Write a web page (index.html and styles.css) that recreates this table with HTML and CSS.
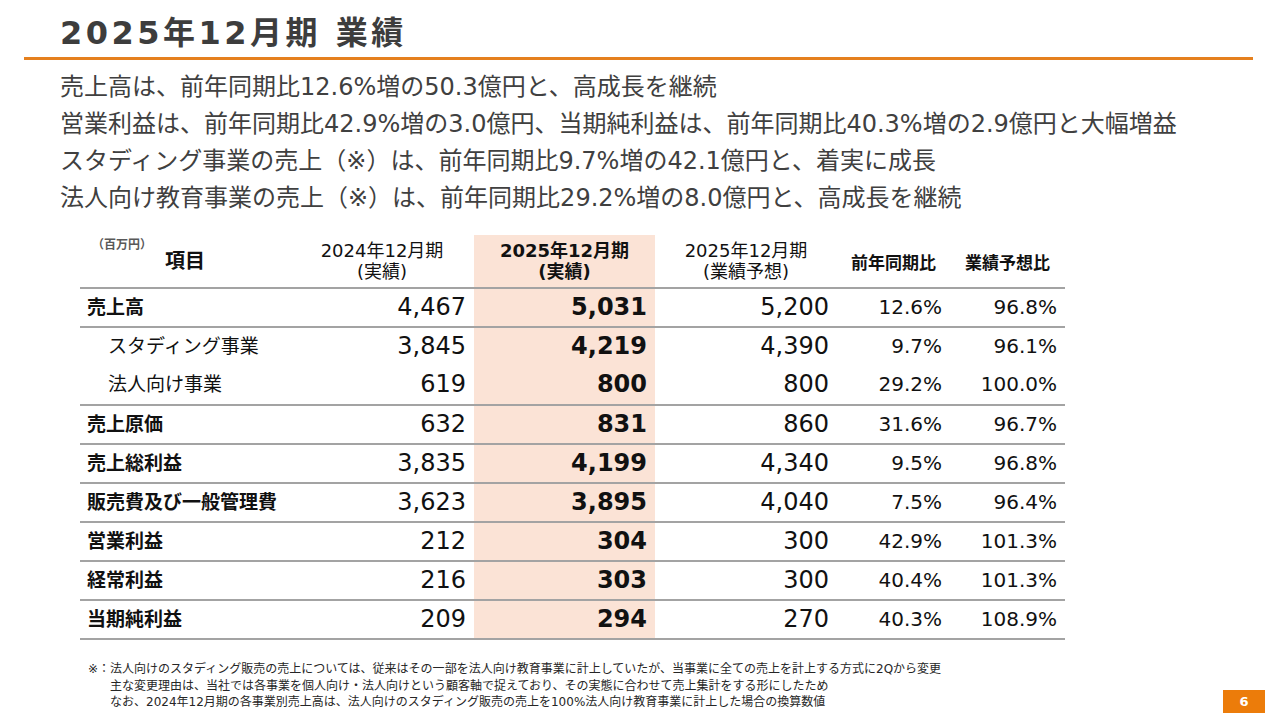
FILE: index.html
```html
<!DOCTYPE html>
<html lang="ja">
<head>
<meta charset="utf-8">
<title>2025年12月期 業績</title>
<link rel="stylesheet" href="styles.css">
</head>
<body>
<div class="slide">
  <header class="title-bar">
    <h1 class="title">2025年12月期 業績</h1>
  </header>
  <ul class="points">
    <li>売上高は、前年同期比12.6%増の50.3億円と、高成長を継続</li>
    <li>営業利益は、前年同期比42.9%増の3.0億円、当期純利益は、前年同期比40.3%増の2.9億円と大幅増益</li>
    <li>スタディング事業の売上（※）は、前年同期比9.7%増の42.1億円と、着実に成長</li>
    <li>法人向け教育事業の売上（※）は、前年同期比29.2%増の8.0億円と、高成長を継続</li>
  </ul>
  <table class="results">
    <colgroup>
      <col class="c-label"><col class="c-prev"><col class="c-cur"><col class="c-plan"><col class="c-yoy"><col class="c-vsplan">
    </colgroup>
    <thead>
      <tr>
        <th class="h-item"><div class="unit">（百万円）</div><div class="item-label">項目</div></th>
        <th class="h-period">2024年12月期<br>(実績)</th>
        <th class="h-period h-cur">2025年12月期<br>(実績)</th>
        <th class="h-period">2025年12月期<br>(業績予想)</th>
        <th class="h-ratio">前年同期比</th>
        <th class="h-ratio">業績予想比</th>
      </tr>
    </thead>
    <tbody>
      <tr><td class="label">売上高</td><td class="num">4,467</td><td class="num cur">5,031</td><td class="num">5,200</td><td class="pct">12.6%</td><td class="pct">96.8%</td></tr>
      <tr><td class="label sub">スタディング事業</td><td class="num">3,845</td><td class="num cur">4,219</td><td class="num">4,390</td><td class="pct">9.7%</td><td class="pct">96.1%</td></tr>
      <tr class="no-line"><td class="label sub">法人向け事業</td><td class="num">619</td><td class="num cur">800</td><td class="num">800</td><td class="pct">29.2%</td><td class="pct">100.0%</td></tr>
      <tr><td class="label">売上原価</td><td class="num">632</td><td class="num cur">831</td><td class="num">860</td><td class="pct">31.6%</td><td class="pct">96.7%</td></tr>
      <tr><td class="label">売上総利益</td><td class="num">3,835</td><td class="num cur">4,199</td><td class="num">4,340</td><td class="pct">9.5%</td><td class="pct">96.8%</td></tr>
      <tr><td class="label">販売費及び一般管理費</td><td class="num">3,623</td><td class="num cur">3,895</td><td class="num">4,040</td><td class="pct">7.5%</td><td class="pct">96.4%</td></tr>
      <tr><td class="label">営業利益</td><td class="num">212</td><td class="num cur">304</td><td class="num">300</td><td class="pct">42.9%</td><td class="pct">101.3%</td></tr>
      <tr><td class="label">経常利益</td><td class="num">216</td><td class="num cur">303</td><td class="num">300</td><td class="pct">40.4%</td><td class="pct">101.3%</td></tr>
      <tr class="last"><td class="label">当期純利益</td><td class="num">209</td><td class="num cur">294</td><td class="num">270</td><td class="pct">40.3%</td><td class="pct">108.9%</td></tr>
    </tbody>
  </table>
  <footer class="foot">
    <div class="notes">
      <p class="note"><span class="mark">※：</span>法人向けのスタディング販売の売上については、従来はその一部を法人向け教育事業に計上していたが、当事業に全ての売上を計上する方式に2Qから変更</p>
      <p class="note cont">主な変更理由は、当社では各事業を個人向け・法人向けという顧客軸で捉えており、その実態に合わせて売上集計をする形にしたため</p>
      <p class="note cont">なお、2024年12月期の各事業別売上高は、法人向けのスタディング販売の売上を100%法人向け教育事業に計上した場合の換算数値</p>
    </div>
    <div class="page-no">6</div>
  </footer>
</div>
</body>
</html>
```
FILE: styles.css
```css
html, body {
  margin: 0;
  padding: 0;
  background: #ffffff;
}
body {
  font-family: "DejaVu Sans", "Noto Sans CJK JP", sans-serif;
  color: #262626;
}
.slide {
  width: 1280px;
  height: 720px;
  overflow: hidden;
}
.title-bar {
  margin: 0 27px 0 24px;
  padding: 10px 0 0 36px;
  height: 47px;
  border-bottom: 3px solid #e5801e;
}
.title {
  margin: 0;
  font-size: 32px;
  line-height: 47px;
  font-weight: 700;
  letter-spacing: 3.5px;
  color: #3d3d3d;
}
.points {
  list-style: none;
  margin: 9px 0 0 0;
  padding: 0 0 0 60px;
  font-size: 24px;
  line-height: 37px;
  color: #404040;
}
.points li {
  white-space: nowrap;
  height: 37px;
}
.results {
  margin: 18px 0 0 80px;
  border-collapse: separate;
  border-spacing: 0;
  table-layout: fixed;
  width: 985px;
  color: #111;
}
.c-label { width: 210px; }
.c-prev { width: 184px; }
.c-cur { width: 181px; }
.c-plan { width: 182px; }
.c-yoy { width: 113px; }
.c-vsplan { width: 115px; }
.results th {
  height: 50px;
  padding: 0;
  font-weight: 400;
  vertical-align: middle;
  text-align: center;
}
.h-item {
  vertical-align: top !important;
  padding-top: 2px !important;
  font-family: "Noto Sans CJK JP", sans-serif;
}
.unit {
  text-align: left;
  padding-left: 12px;
  font-size: 12px;
  line-height: 14px;
  color: #595959;
  font-weight: 700;
}
.item-label {
  margin-top: -2px;
  font-size: 20px;
  line-height: 22px;
  font-weight: 700;
  color: #111;
}
.h-period {
  font-size: 18px;
  line-height: 21px;
}
.h-cur {
  font-weight: 700 !important;
  background: #fbe3d6;
}
.h-ratio {
  font-size: 17px;
  font-weight: 700 !important;
  font-family: "Noto Sans CJK JP", sans-serif;
}
.results td {
  padding: 0;
  height: 37px;
  line-height: 37px;
  border-top: 2px solid #a3a3a3;
  white-space: nowrap;
}
.results tr.no-line td {
  border-top: 0;
  height: 39px;
  line-height: 39px;
}
.results tr.last td {
  border-bottom: 2px solid #a3a3a3;
}
.results td.label {
  padding: 0 0 3px 7px;
  height: 34px;
  line-height: 34px;
  font-family: "Noto Sans CJK JP", sans-serif;
  font-size: 19px;
  font-weight: 700;
  vertical-align: middle;
}
.results tr.no-line td.label {
  height: 36px;
  line-height: 36px;
}
.results td.label.sub {
  padding-left: 28px;
  font-weight: 400;
}
.num {
  text-align: right;
  padding-right: 8px !important;
  font-size: 24px;
}
.num.cur {
  font-weight: 700;
  background: #fbe3d6;
}
.pct {
  text-align: right;
  padding-right: 8px !important;
  font-size: 20px;
}
.foot {
  display: flex;
  justify-content: space-between;
  align-items: flex-start;
  margin-top: 21px;
  padding: 0 15px 0 88px;
}
.notes {
  font-size: 12px;
  line-height: 16.5px;
  color: #262626;
}
.note {
  margin: 0;
  white-space: nowrap;
}
.note.cont {
  padding-left: 22px;
}
.page-no {
  margin-top: 29px;
  width: 42px;
  height: 23px;
  background: #ec7c0a;
  color: #ffffff;
  font-weight: 700;
  font-size: 13px;
  line-height: 23px;
  text-align: center;
}
```
